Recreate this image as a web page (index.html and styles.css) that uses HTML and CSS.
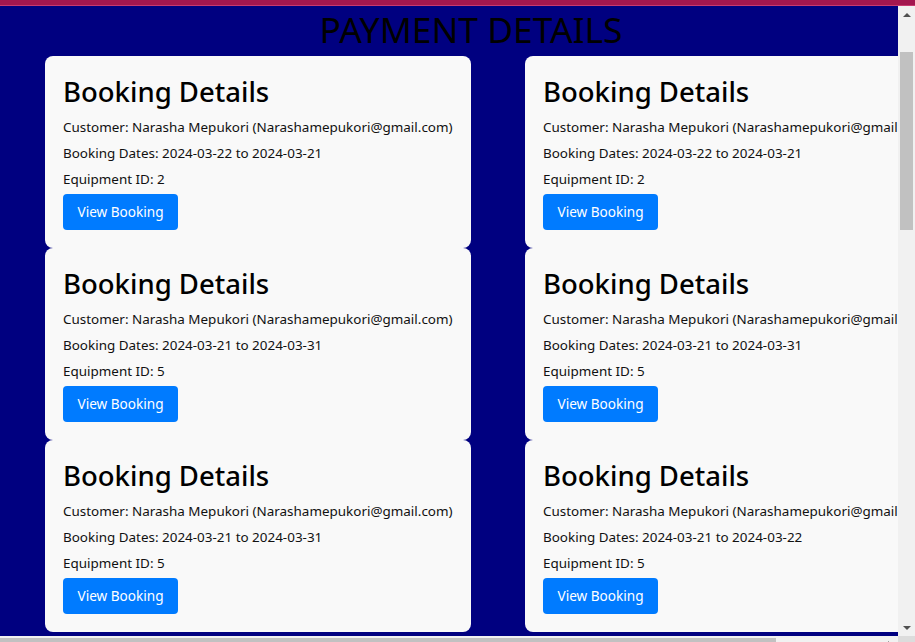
FILE: index.html
```html
<!DOCTYPE html>
<html lang="en">
<head>
<meta charset="utf-8">
<title>Payment Details</title>
<link rel="stylesheet" href="styles.css">
</head>
<body>
<div class="topbar"></div>
<div class="frame">
  <div class="frame-row">
    <main class="viewport">
      <div class="content">
        <h1 class="page-title">PAYMENT DETAILS</h1>
        <div class="cards">
          <section class="card">
            <h2 class="card-title">Booking Details</h2>
            <p class="card-line">Customer: Narasha Mepukori (Narashamepukori@gmail.com)</p>
            <p class="card-line">Booking Dates: 2024-03-22 to 2024-03-21</p>
            <p class="card-line">Equipment ID: 2</p>
            <a class="btn" href="#">View Booking</a>
          </section>
          <section class="card">
            <h2 class="card-title">Booking Details</h2>
            <p class="card-line">Customer: Narasha Mepukori (Narashamepukori@gmail.com)</p>
            <p class="card-line">Booking Dates: 2024-03-22 to 2024-03-21</p>
            <p class="card-line">Equipment ID: 2</p>
            <a class="btn" href="#">View Booking</a>
          </section>
          <section class="card">
            <h2 class="card-title">Booking Details</h2>
            <p class="card-line">Customer: Narasha Mepukori (Narashamepukori@gmail.com)</p>
            <p class="card-line">Booking Dates: 2024-03-21 to 2024-03-31</p>
            <p class="card-line">Equipment ID: 5</p>
            <a class="btn" href="#">View Booking</a>
          </section>
          <section class="card">
            <h2 class="card-title">Booking Details</h2>
            <p class="card-line">Customer: Narasha Mepukori (Narashamepukori@gmail.com)</p>
            <p class="card-line">Booking Dates: 2024-03-21 to 2024-03-31</p>
            <p class="card-line">Equipment ID: 5</p>
            <a class="btn" href="#">View Booking</a>
          </section>
          <section class="card">
            <h2 class="card-title">Booking Details</h2>
            <p class="card-line">Customer: Narasha Mepukori (Narashamepukori@gmail.com)</p>
            <p class="card-line">Booking Dates: 2024-03-21 to 2024-03-31</p>
            <p class="card-line">Equipment ID: 5</p>
            <a class="btn" href="#">View Booking</a>
          </section>
          <section class="card">
            <h2 class="card-title">Booking Details</h2>
            <p class="card-line">Customer: Narasha Mepukori (Narashamepukori@gmail.com)</p>
            <p class="card-line">Booking Dates: 2024-03-21 to 2024-03-22</p>
            <p class="card-line">Equipment ID: 5</p>
            <a class="btn" href="#">View Booking</a>
          </section>
        </div>
      </div>
    </main>
    <div class="vscroll">
      <div class="arrow-btn"><span class="tri tri-up"></span></div>
      <div class="vtrack"><div class="vthumb"></div></div>
      <div class="arrow-btn"><span class="tri tri-down"></span></div>
    </div>
  </div>
  <div class="hscroll">
    <div class="htrack"><div class="hthumb"></div></div>
    <div class="arrow-btn-h"><span class="tri tri-right"></span></div>
    <div class="corner"></div>
  </div>
</div>
</body>
</html>
```

FILE: styles.css
```css
* { box-sizing: border-box; }

html, body {
  margin: 0;
  padding: 0;
  height: 100%;
  overflow: hidden;
}

body {
  font-family: "Noto Sans", "Open Sans", sans-serif;
  background: #f1f1f1;
  color: #000;
}

.topbar {
  height: 6px;
  background: #a3174f;
  border-bottom: 1px solid #c83a70;
}

.frame {
  display: flex;
  flex-direction: column;
  height: 653px;
}

.frame-row {
  display: flex;
  height: 630px;
}

.viewport {
  flex: 1;
  overflow: hidden;
  background: #000080;
}

.content {
  width: 996px;
}

.page-title {
  width: 942px;
  margin: 0;
  height: 50px;
  line-height: 46px;
  text-align: center;
  font-size: 35.4px;
  font-weight: 400;
  color: #000;
}

.cards {
  display: grid;
  grid-template-columns: 426px 426px;
  column-gap: 54px;
  padding-left: 45px;
}

.card {
  height: 192px;
  background: #f9f9f9;
  border-radius: 8px;
  padding: 14px 18px 17px;
}

.card-title {
  margin: 0;
  height: 44px;
  line-height: 44px;
  font-size: 27.5px;
  font-weight: 500;
  white-space: nowrap;
}

.card-line {
  margin: 0;
  line-height: 26px;
  font-size: 13.45px;
  color: #111;
  white-space: nowrap;
}

.btn {
  display: inline-block;
  margin-top: 2px;
  height: 36px;
  line-height: 36px;
  padding: 0 14.5px;
  background: #007bff;
  color: #fff;
  border-radius: 4px;
  font-size: 13.6px;
  text-decoration: none;
}

.vscroll {
  width: 17px;
  display: flex;
  flex-direction: column;
  background: #f1f1f1;
}

.arrow-btn {
  height: 17px;
  display: flex;
  align-items: center;
  justify-content: center;
}

.vtrack {
  flex: 1;
  padding: 29px 2px 0;
}

.vthumb {
  height: 178px;
  background: #c1c1c1;
}

.tri {
  width: 0;
  height: 0;
  border-style: solid;
}

.tri-up {
  border-width: 0 4px 4px 4px;
  border-color: transparent transparent #505050 transparent;
}

.tri-down {
  border-width: 4px 4px 0 4px;
  border-color: #505050 transparent transparent transparent;
}

.tri-right {
  border-width: 4px 0 4px 4px;
  border-color: transparent transparent transparent #505050;
}

.hscroll {
  height: 17px;
  display: flex;
  background: #f1f1f1;
}

.htrack {
  flex: 1;
  padding: 2px 0;
}

.hthumb {
  width: 776px;
  height: 13px;
  background: #c1c1c1;
}

.arrow-btn-h {
  width: 17px;
  display: flex;
  align-items: center;
  justify-content: center;
}

.corner {
  width: 17px;
  background: #dcdcdc;
}
```
